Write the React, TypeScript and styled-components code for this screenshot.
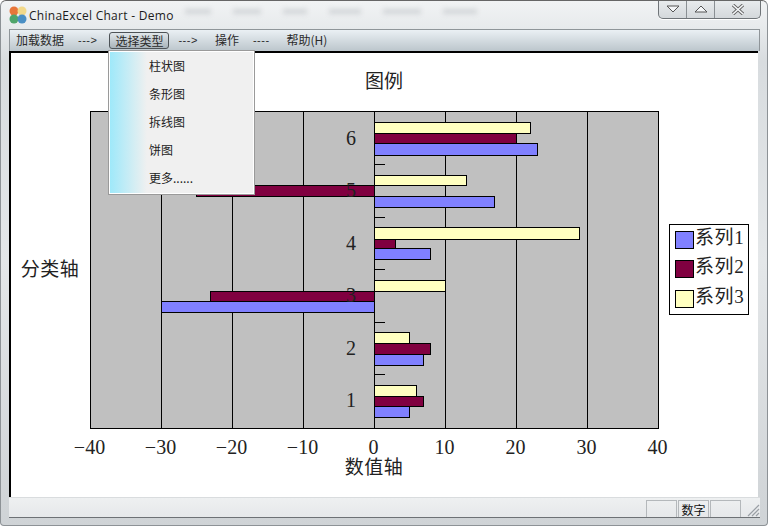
import React from 'react';
import styled, { createGlobalStyle } from 'styled-components';

const GlobalStyle = createGlobalStyle`
  html, body {
    margin: 0;
    padding: 0;
    background: #fff;
    overflow: hidden;
  }
`;

const UI_FONT = '"Noto Sans CJK SC", "Liberation Sans", sans-serif';
const CHART_FONT = '"Liberation Serif", "Noto Sans CJK SC", serif';

const categories = [
  { label: '6', labelY: 145, rows: [{ y: 122, h: 11, v: 22 }, { y: 133, h: 10, v: 20 }, { y: 143, h: 12, v: 23 }] },
  { label: '5', labelY: 197, rows: [{ y: 175, h: 10, v: 13 }, { y: 185, h: 11, v: -25 }, { y: 196, h: 11, v: 17 }] },
  { label: '4', labelY: 250, rows: [{ y: 227, h: 12, v: 29 }, { y: 239, h: 9, v: 3 }, { y: 248, h: 11, v: 8 }] },
  { label: '3', labelY: 302, rows: [{ y: 280, h: 11, v: 10 }, { y: 291, h: 10, v: -23 }, { y: 301, h: 11, v: -30 }] },
  { label: '2', labelY: 355, rows: [{ y: 332, h: 11, v: 5 }, { y: 343, h: 11, v: 8 }, { y: 354, h: 11, v: 7 }] },
  { label: '1', labelY: 407, rows: [{ y: 385, h: 11, v: 6 }, { y: 396, h: 10, v: 7 }, { y: 406, h: 11, v: 5 }] },
];

const seriesColors = ['#ffffc0', '#800040', '#8080ff'];
const legend = [
  { name: '系列1', color: '#8080ff', y: 231 },
  { name: '系列2', color: '#800040', y: 260 },
  { name: '系列3', color: '#ffffc0', y: 290 },
];
const ticks = [-40, -30, -20, -10, 0, 10, 20, 30, 40];
const X0 = 374.5;
const UNIT = 7.1;

const menuItems = ['柱状图', '条形图', '拆线图', '饼图', '更多......'];

function AppIcon() {
  return (
    <svg width="18" height="18" viewBox="0 0 18 18">
      <circle cx="5" cy="5" r="4.5" fill="#e8763a" />
      <circle cx="13" cy="5" r="4.5" fill="#f2d98a" />
      <circle cx="5" cy="13" r="4.5" fill="#4fa56b" />
      <circle cx="13" cy="13" r="4.5" fill="#4a8fc4" />
    </svg>
  );
}

function Chart() {
  return (
    <ChartSvg width="747" height="444" viewBox="11 53 747 444">
      <rect x="90.5" y="111.5" width="568" height="317" fill="#c0c0c0" stroke="#000" />
      {ticks.slice(1, -1).map((t) => (
        <line key={t} x1={X0 + t * UNIT} x2={X0 + t * UNIT} y1="111" y2="428" stroke="#000" />
      ))}
      {[164, 217, 269, 322, 374].map((y) => (
        <line key={y} x1="374" x2="385" y1={y + 0.5} y2={y + 0.5} stroke="#000" />
      ))}
      {categories.map((c) =>
        c.rows.map((r, i) => {
          const w = Math.floor(r.v * UNIT);
          return (
            <rect
              key={c.label + i}
              x={(w < 0 ? X0 + w : X0)}
              y={r.y + 0.5}
              width={Math.abs(w)}
              height={r.h}
              fill={seriesColors[i]}
              stroke="#000"
            />
          );
        })
      )}
      {categories.map((c) => (
        <text key={c.label} x="351" y={c.labelY} fontSize="20" textAnchor="middle" fill="#222">
          {c.label}
        </text>
      ))}
      {ticks.map((t) => (
        <text key={t} x={X0 + t * UNIT - 1} y="454" fontSize="20" textAnchor="middle" fill="#222">
          {t < 0 ? `−${-t}` : t}
        </text>
      ))}
      <text x="384" y="88" fontSize="19" textAnchor="middle" fill="#222">图例</text>
      <text x="50" y="276" fontSize="19" letterSpacing="0.5" textAnchor="middle" fill="#222">分类轴</text>
      <text x="374" y="474" fontSize="19" letterSpacing="0.5" textAnchor="middle" fill="#222">数值轴</text>
      <rect x="669.5" y="224.5" width="79" height="90" fill="#fff" stroke="#000" />
      {legend.map((l) => (
        <g key={l.name}>
          <rect x="675.5" y={l.y + 0.5} width="18" height="17" fill={l.color} stroke="#000" />
          <text x="695" y={l.y + 13} fontSize="19" letterSpacing="0.6" fill="#222">{l.name}</text>
        </g>
      ))}
    </ChartSvg>
  );
}

export default function App(): JSX.Element {
  return (
    <>
      <GlobalStyle />
      <Win>
        <TitleBar>
          <AppIcon />
          <TitleText>ChinaExcel Chart - Demo</TitleText>
          <Smudges>
            <Smudge $w={26} />
            <Smudge $w={28} />
            <Smudge $w={24} />
            <Smudge $w={32} />
            <Smudge $w={38} />
            <Smudge $w={34} />
          </Smudges>
          <WinControls>
            <WinButton aria-label="minimize">
              <svg width="14" height="8" viewBox="0 0 14 8">
                <path d="M1 1h12L7 7z" fill="#f4f6f8" stroke="#555" />
              </svg>
            </WinButton>
            <WinButton aria-label="maximize">
              <svg width="14" height="8" viewBox="0 0 14 8">
                <path d="M1 7h12L7 1z" fill="#f4f6f8" stroke="#555" />
              </svg>
            </WinButton>
            <CloseButton aria-label="close">
              <svg width="14" height="11" viewBox="0 0 14 11">
                <path d="M2 1l10 9M12 1L2 10" stroke="#666" strokeWidth="3.4" />
                <path d="M2 1l10 9M12 1L2 10" stroke="#f4f6f8" strokeWidth="1.6" />
              </svg>
            </CloseButton>
          </WinControls>
        </TitleBar>
        <MenuBar>
          <MenuLabel>加载数据</MenuLabel>
          <MenuArrow $l={14} $r={12}>---&gt;</MenuArrow>
          <ActiveMenu>选择类型</ActiveMenu>
          <MenuArrow $l={9} $r={17}>---&gt;</MenuArrow>
          <MenuLabel>操作</MenuLabel>
          <MenuArrow $l={14} $r={17}>----</MenuArrow>
          <MenuLabel>帮助(H)</MenuLabel>
        </MenuBar>
        <Client>
          <Chart />
        </Client>
        <StatusBar>
          <StatusPane />
          <StatusPane>数字</StatusPane>
          <StatusPane />
          <Grip>
            <svg width="14" height="14" viewBox="0 0 14 14">
              <path d="M13 2L2 13M13 6L6 13M13 10l-3 3" stroke="#9a9fa5" strokeWidth="1.2" />
            </svg>
          </Grip>
        </StatusBar>
        <Dropdown>
          {menuItems.map((m) => (
            <DropdownItem key={m}>{m}</DropdownItem>
          ))}
        </Dropdown>
      </Win>
    </>
  );
}

const Win = styled.div`
  position: relative;
  width: 768px;
  height: 526px;
  box-sizing: border-box;
  padding: 0 7px 7px 8px;
  display: flex;
  flex-direction: column;
  overflow: hidden;
  font-family: ${UI_FONT};
  font-size: 12px;
  color: #222;
  background: linear-gradient(#f1f3f4 0, #e6e9eb 30px, #d8dcdf 60px, #e4e7e9 260px, #cfd3d6 526px);
  border: 1px solid #8d9296;
  border-radius: 6px 6px 4px 4px;
  border-top-color: #666;
`;

const TitleBar = styled.div`
  height: 27px;
  flex: none;
  display: flex;
  align-items: center;
  gap: 3px;
  position: relative;
`;

const TitleText = styled.span`
  font-family: "Open Sans", "Liberation Sans", sans-serif;
  font-size: 12px;
  letter-spacing: 0.28px;
  color: #1c1c1c;
  padding-top: 1px;
  margin-left: -1px;
`;

const Smudges = styled.div`
  display: flex;
  gap: 22px;
  margin: -7px 0 0 8px;
`;

const Smudge = styled.div<{ $w: number }>`
  width: ${(p) => p.$w}px;
  height: 5px;
  background: #d2d5d8;
  filter: blur(2.5px);
`;

const WinControls = styled.div`
  position: absolute;
  top: -1px;
  right: -1px;
  box-sizing: border-box;
  width: 103px;
  height: 19px;
  display: flex;
  border: 1px solid #6f7478;
  border-top: none;
  border-radius: 0 0 5px 5px;
  background: linear-gradient(#e9ecee, #d4d8db);
  box-shadow: 0 1px 0 #fff;
`;

const WinButton = styled.div`
  width: 27px;
  display: flex;
  align-items: center;
  justify-content: center;
  border-right: 1px solid #8a8f93;
`;

const CloseButton = styled(WinButton)`
  flex: 1;
  border-right: none;
`;

const MenuBar = styled.div`
  height: 22px;
  box-sizing: border-box;
  flex: none;
  display: flex;
  align-items: center;
  padding: 0 0 1px 6px;
  margin-top: 1px;
  background: linear-gradient(#eaf0f4, #bcc6cc);
  border: 1px solid #8f9599;
  border-bottom: none;
  color: #2b2b2b;
`;

const MenuLabel = styled.span`
  line-height: 16px;
`;

const MenuArrow = styled.span<{ $l: number; $r: number }>`
  margin: 0 ${(p) => p.$r}px 0 ${(p) => p.$l}px;
  font-family: "Liberation Sans", sans-serif;
  font-size: 11px;
  letter-spacing: 0.5px;
`;

const ActiveMenu = styled.span`
  padding: 0 5px;
  line-height: 15px;
  border: 1px solid #4d5357;
  border-radius: 3px;
  background: linear-gradient(#dfe6ea, #aab4ba);
`;

const Client = styled.div`
  flex: 1;
  min-height: 0;
  background: #fff;
  border-top: 2px solid #000;
  border-left: 2px solid #000;
  margin-right: 2px;
  display: flex;
`;

const ChartSvg = styled.svg`
  flex: none;
  display: block;
  font-family: ${CHART_FONT};
`;

const StatusBar = styled.div`
  height: 21px;
  box-sizing: border-box;
  flex: none;
  display: flex;
  align-items: flex-end;
  justify-content: flex-end;
  gap: 1px;
  background: linear-gradient(#eef0f1, #e6e8ea);
  border-top: 1px solid #d9dcde;
  border-bottom: 1px solid #6d7175;
`;

const StatusPane = styled.div`
  width: 29px;
  height: 16px;
  line-height: 17px;
  text-align: center;
  border: 1px solid #b4b8bb;
  border-bottom: none;
  font-size: 12px;
  color: #111;
`;

const Grip = styled.div`
  width: 18px;
  height: 18px;
  display: flex;
  align-items: flex-end;
  justify-content: flex-end;
`;

const Dropdown = styled.div`
  position: absolute;
  left: 107px;
  top: 49px;
  width: 145px;
  height: 141px;
  padding: 1px 0;
  border: 1px solid #9a9a9a;
  outline: 1px solid #fff;
  outline-offset: -2px;
  background: linear-gradient(90deg, #9de9fa 0, #aeeaf8 8px, #f0f0f0 38px);
`;

const DropdownItem = styled.div`
  height: 28px;
  line-height: 28px;
  padding-left: 40px;
  color: #222;
`;
